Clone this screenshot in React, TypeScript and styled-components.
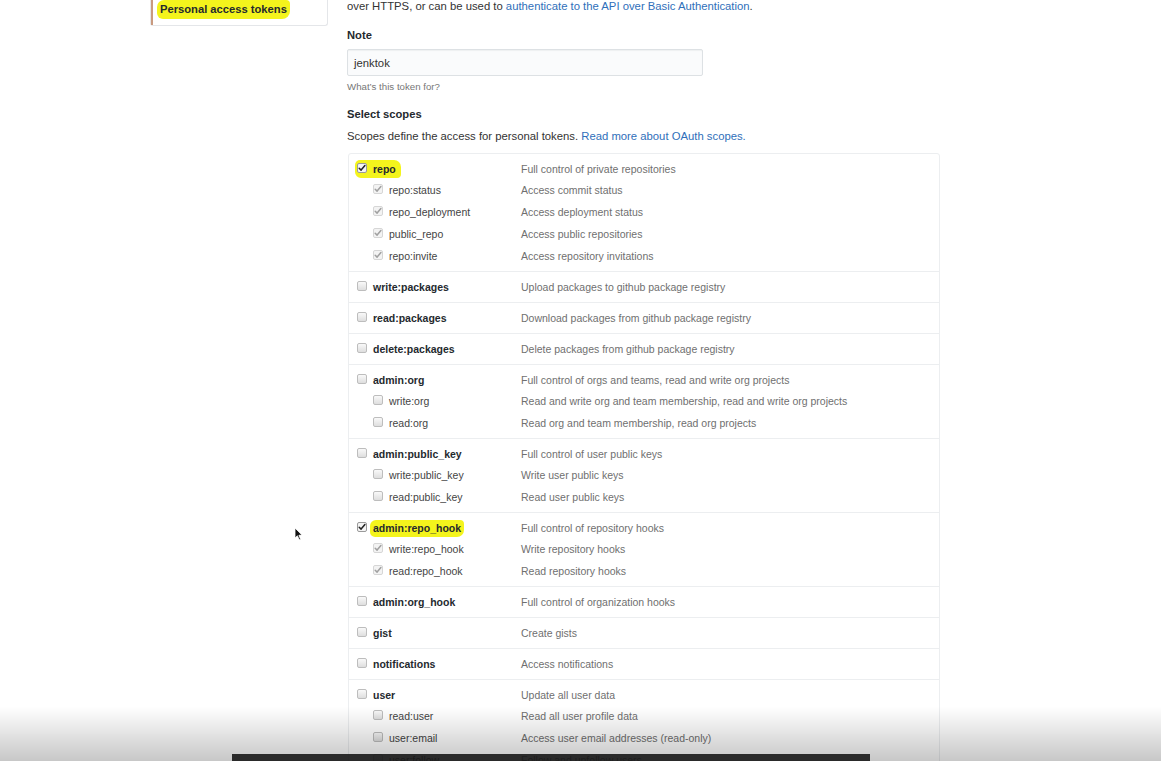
import React from 'react'
import styled, { createGlobalStyle, css } from 'styled-components'

const GlobalStyle = createGlobalStyle`
  html, body {
    margin: 0;
    padding: 0;
    background: #fff;
    overflow: hidden;
  }
  body {
    font-family: "Liberation Sans", Arial, sans-serif;
    color: #24292e;
    font-size: 10.5px;
  }
`

type Scope = {
  name: string
  desc: string
  checked?: boolean
  mark?: 'all' | 'label'
  subs?: { name: string; desc: string; checked?: boolean }[]
}

const scopes: Scope[] = [
  {
    name: 'repo',
    desc: 'Full control of private repositories',
    checked: true,
    mark: 'all',
    subs: [
      { name: 'repo:status', desc: 'Access commit status', checked: true },
      { name: 'repo_deployment', desc: 'Access deployment status', checked: true },
      { name: 'public_repo', desc: 'Access public repositories', checked: true },
      { name: 'repo:invite', desc: 'Access repository invitations', checked: true },
    ],
  },
  { name: 'write:packages', desc: 'Upload packages to github package registry' },
  { name: 'read:packages', desc: 'Download packages from github package registry' },
  { name: 'delete:packages', desc: 'Delete packages from github package registry' },
  {
    name: 'admin:org',
    desc: 'Full control of orgs and teams, read and write org projects',
    subs: [
      { name: 'write:org', desc: 'Read and write org and team membership, read and write org projects' },
      { name: 'read:org', desc: 'Read org and team membership, read org projects' },
    ],
  },
  {
    name: 'admin:public_key',
    desc: 'Full control of user public keys',
    subs: [
      { name: 'write:public_key', desc: 'Write user public keys' },
      { name: 'read:public_key', desc: 'Read user public keys' },
    ],
  },
  {
    name: 'admin:repo_hook',
    desc: 'Full control of repository hooks',
    checked: true,
    mark: 'label',
    subs: [
      { name: 'write:repo_hook', desc: 'Write repository hooks', checked: true },
      { name: 'read:repo_hook', desc: 'Read repository hooks', checked: true },
    ],
  },
  { name: 'admin:org_hook', desc: 'Full control of organization hooks' },
  { name: 'gist', desc: 'Create gists' },
  { name: 'notifications', desc: 'Access notifications' },
  {
    name: 'user',
    desc: 'Update all user data',
    subs: [
      { name: 'read:user', desc: 'Read all user profile data' },
      { name: 'user:email', desc: 'Access user email addresses (read-only)' },
      { name: 'user:follow', desc: 'Follow and unfollow users' },
    ],
  },
]

const Page = styled.div`
  display: flex;
  align-items: flex-start;
  gap: 19px;
  padding-left: 150px;
  margin-top: -2px;
`

const SideMenu = styled.nav`
  width: 176px;
  margin-top: -5px;
  border: 1px solid #e4e6e9;
  border-top: none;
  border-radius: 0 0 3px 3px;
`

const MenuItem = styled.div`
  display: flex;
  align-items: center;
  height: 32px;
  padding-left: 7px;
  border-left: 2px solid #c99a7f;
  font-size: 11.2px;
  font-weight: 700;
  color: #24292e;
`

const MenuMark = styled.span`
  background: #f4f41c;
  border-radius: 7px 4px 8px 6px;
  padding: 3px 3px 4px;
  margin: 0 -3px;
`

const Mark = styled.span`
  height: 17px;
  line-height: 17px;
  background: #f4f41c;
  border-radius: 6px 4px 7px 5px;
  padding: 0 3px;
  margin: 0 -3px;
`

const Main = styled.main`
  width: 594px;
`

const Lead = styled.p`
  margin: 0;
  line-height: 16px;
  font-size: 11.3px;
  color: #333;
  white-space: nowrap;
`

const Link = styled.a`
  color: #2f6fba;
  text-decoration: none;
`

const FieldLabel = styled.div<{ $top: number }>`
  margin-top: ${(p) => p.$top}px;
  line-height: 16px;
  font-size: 11.2px;
  font-weight: 700;
  color: #24292e;
`

const TextInput = styled.div`
  box-sizing: border-box;
  width: 356px;
  height: 27px;
  margin-top: 6px;
  padding: 0 6px;
  display: flex;
  align-items: center;
  background: #fafbfc;
  border: 1px solid #dde1e4;
  border-radius: 2px;
  box-shadow: inset 0 1px 1px rgba(27, 31, 35, 0.05);
  color: #333;
  font-size: 11.3px;
`

const Hint = styled.div`
  margin-top: 4px;
  line-height: 14px;
  font-size: 9.7px;
  color: #777;
`

const Intro = styled.p`
  margin: 6px 0 0;
  line-height: 16px;
  font-size: 11.3px;
  color: #333;
  white-space: nowrap;
`

const ScopeTable = styled.ul`
  list-style: none;
  margin: 9px 0 0 1px;
  padding: 0;
  width: 592px;
  box-sizing: border-box;
  border: 1px solid #eceef0;
  border-radius: 3px;
`

const ScopeGroup = styled.li<{ $group: boolean }>`
  padding: 5px 0 ${(p) => (p.$group ? 4 : 5)}px 8px;
  border-bottom: 1px solid #eceef0;
`

const ScopeLine = styled.div<{ $sub?: boolean }>`
  display: grid;
  grid-template-columns: ${(p) => (p.$sub ? '148px' : '164px')} 1fr;
  padding-left: ${(p) => (p.$sub ? 16 : 0)}px;
  height: ${(p) => (p.$sub ? 22 : 20)}px;
  line-height: ${(p) => (p.$sub ? 22 : 20)}px;
  align-items: center;
`

const ScopeName = styled.span<{ $sub?: boolean }>`
  display: flex;
  align-items: center;
  gap: 6px;
  font-weight: ${(p) => (p.$sub ? 400 : 700)};
  color: ${(p) => (p.$sub ? '#444' : '#24292e')};
`

const MarkedName = styled.span`
  display: inline-flex;
  align-items: center;
  gap: 6px;
  height: 18px;
  background: #f4f41c;
  border-radius: 5px 7px 4px 6px;
  padding: 0 5px 0 2px;
  margin-left: -2px;
  line-height: 18px;
`

const ScopeDesc = styled.span`
  color: #6f6f6f;
`

const Box = styled.span<{ $checked?: boolean; $faded?: boolean }>`
  position: relative;
  top: -1px;
  display: inline-flex;
  align-items: center;
  justify-content: center;
  flex: none;
  box-sizing: border-box;
  width: 10px;
  height: 10px;
  border-radius: 2px;
  border: 1px solid #bdbdbd;
  background: linear-gradient(#f9f9f9, #dedede);
  ${(p) =>
    p.$checked &&
    css`
      border-color: ${p.$faded ? '#d6d6d6' : '#9a9a9a'};
      background: ${p.$faded ? '#f3f3f3' : '#f4f4f4'};
    `}
`

const Checkbox = ({ checked, faded }: { checked?: boolean; faded?: boolean }) => (
  <Box $checked={checked} $faded={faded}>
    {checked && (
      <svg width="8" height="8" viewBox="0 0 8 8">
        <path
          d="M1.2 4.2 L3.1 6.1 L6.9 1.6"
          fill="none"
          stroke={faded ? '#a0a0a0' : '#222'}
          strokeWidth="1.5"
          strokeLinecap="round"
          strokeLinejoin="round"
        />
      </svg>
    )}
  </Box>
)

const ScopeRow = ({ scope }: { scope: Scope }) => {
  const box = <Checkbox checked={scope.checked} />
  let name: React.ReactNode = (
    <>
      {box}
      <span>{scope.name}</span>
    </>
  )
  if (scope.mark === 'all') {
    name = (
      <MarkedName>
        {box}
        <span>{scope.name}</span>
      </MarkedName>
    )
  } else if (scope.mark === 'label') {
    name = (
      <>
        {box}
        <Mark>{scope.name}</Mark>
      </>
    )
  }
  return (
    <ScopeGroup $group={!!scope.subs}>
      <ScopeLine>
        <ScopeName>{name}</ScopeName>
        <ScopeDesc>{scope.desc}</ScopeDesc>
      </ScopeLine>
      {scope.subs?.map((sub) => (
        <ScopeLine $sub key={sub.name}>
          <ScopeName $sub>
            <Checkbox checked={sub.checked} faded />
            <span>{sub.name}</span>
          </ScopeName>
          <ScopeDesc>{sub.desc}</ScopeDesc>
        </ScopeLine>
      ))}
    </ScopeGroup>
  )
}

// video player chrome lying over the page
const PlayerShade = styled.div`
  position: fixed;
  left: 0;
  right: 0;
  bottom: 0;
  height: 54px;
  background: linear-gradient(rgba(0, 0, 0, 0), rgba(0, 0, 0, 0.22));
  pointer-events: none;
`

const PlayerBar = styled.div`
  position: fixed;
  left: 232px;
  top: 754px;
  width: 638px;
  height: 8px;
  background: rgba(24, 24, 24, 0.9);
`

const Cursor = styled.svg`
  position: fixed;
  left: 294px;
  top: 527px;
`

export default function App() {
  return (
    <>
      <GlobalStyle />
      <Page>
        <SideMenu>
          <MenuItem>
            <MenuMark>Personal access tokens</MenuMark>
          </MenuItem>
        </SideMenu>
        <Main>
          <Lead>
            over HTTPS, or can be used to <Link href="#">authenticate to the API over Basic Authentication</Link>.
          </Lead>
          <FieldLabel $top={13}>Note</FieldLabel>
          <TextInput>jenktok</TextInput>
          <Hint>What’s this token for?</Hint>
          <FieldLabel $top={12}>Select scopes</FieldLabel>
          <Intro>
            Scopes define the access for personal tokens. <Link href="#">Read more about OAuth scopes.</Link>
          </Intro>
          <ScopeTable>
            {scopes.map((s) => (
              <ScopeRow scope={s} key={s.name} />
            ))}
          </ScopeTable>
        </Main>
      </Page>
      <PlayerShade />
      <PlayerBar />
      <Cursor width="9" height="14" viewBox="0 0 9 14">
        <path d="M1 1 L1 11 L3.4 8.8 L5.2 12.8 L6.6 12.2 L4.9 8.3 L8 8.1 Z" fill="#111" stroke="#fff" strokeWidth="0.8" />
      </Cursor>
    </>
  )
}
